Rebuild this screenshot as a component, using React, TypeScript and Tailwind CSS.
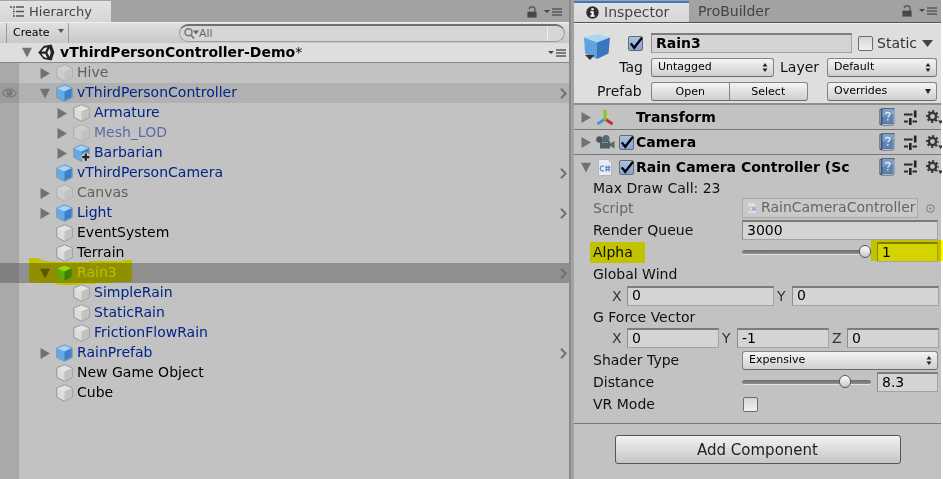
import { useState, type ReactNode } from 'react';

type CubeTone = 'blue' | 'white' | 'faded';

type Node = {
  name: string;
  depth: 1 | 2;
  cube: CubeTone;
  text: string;
  arrow?: 'right' | 'down';
  chevron?: boolean;
  added?: boolean;
  state?: 'hover' | 'selected';
};

const BLUE = 'text-[#002588]';
const NODES: Node[] = [
  { name: 'Hive', depth: 1, cube: 'faded', text: 'text-[#5f5f5f]', arrow: 'right' },
  { name: 'vThirdPersonController', depth: 1, cube: 'blue', text: BLUE, arrow: 'down', chevron: true, state: 'hover' },
  { name: 'Armature', depth: 2, cube: 'white', text: BLUE, arrow: 'right' },
  { name: 'Mesh_LOD', depth: 2, cube: 'faded', text: 'text-[#5a6ea6]', arrow: 'right' },
  { name: 'Barbarian', depth: 2, cube: 'blue', text: BLUE, arrow: 'right', added: true },
  { name: 'vThirdPersonCamera', depth: 1, cube: 'blue', text: BLUE, chevron: true },
  { name: 'Canvas', depth: 1, cube: 'faded', text: 'text-[#5f5f5f]', arrow: 'right' },
  { name: 'Light', depth: 1, cube: 'blue', text: BLUE, arrow: 'right', chevron: true },
  { name: 'EventSystem', depth: 1, cube: 'white', text: 'text-black' },
  { name: 'Terrain', depth: 1, cube: 'white', text: 'text-black' },
  { name: 'Rain3', depth: 1, cube: 'blue', text: 'text-[#b4c2dc]', arrow: 'down', chevron: true, state: 'selected' },
  { name: 'SimpleRain', depth: 2, cube: 'white', text: BLUE },
  { name: 'StaticRain', depth: 2, cube: 'white', text: BLUE },
  { name: 'FrictionFlowRain', depth: 2, cube: 'white', text: BLUE },
  { name: 'RainPrefab', depth: 1, cube: 'blue', text: BLUE, arrow: 'right', chevron: true },
  { name: 'New Game Object', depth: 1, cube: 'white', text: 'text-black' },
  { name: 'Cube', depth: 1, cube: 'white', text: 'text-black' },
];

const CUBES = {
  blue: { top: '#a4d4f7', left: '#65aae6', right: '#3f80c8', edge: '#7795b0' },
  white: { top: '#e4e4e4', left: '#dddddd', right: '#c2c2c2', edge: '#939393' },
  faded: { top: '#d0d0d0', left: '#cccccc', right: '#c2c2c2', edge: '#adadad' },
};

function CubeIcon({ tone, added }: { tone: CubeTone; added?: boolean }) {
  const c = CUBES[tone];
  return (
    <svg viewBox="0 0 17 18" className="h-[18px] w-[17px] shrink-0" aria-hidden="true">
      <path d="M8.5 .8 16.2 4v9.4L8.5 17.3.8 13.4V4z" fill={c.left} stroke={c.edge} strokeWidth="1" strokeLinejoin="round" />
      <path d="M8.5 1.4 15.6 4.3 8.5 7.6 1.4 4.3z" fill={c.top} />
      <path d="M8.5 7.6 15.6 4.3v8.8l-7.1 3.6z" fill={c.right} />
      {added && (
        <g>
          <circle cx="12.8" cy="13.2" r="4.6" fill="#c8c8c8" />
          <path d="M11.7 9.6h2.2v2.5h2.5v2.2h-2.5v2.5h-2.2v-2.5H9.2v-2.2h2.5z" fill="#222" />
        </g>
      )}
    </svg>
  );
}

function Triangle({ dir, className = 'fill-[#727272]' }: { dir: 'right' | 'down'; className?: string }) {
  return (
    <svg viewBox="0 0 10 11" className={`h-[11px] w-[10px] shrink-0 ${className}`} aria-hidden="true">
      <path d={dir === 'right' ? 'M.5 0 10 5.5.5 11z' : 'M0 .8h10L5 10.6z'} />
    </svg>
  );
}

function MenuIcon() {
  return (
    <svg viewBox="0 0 18 8" className="h-2 w-[18px]" aria-hidden="true">
      <path d="M0 2h6L3 5z" fill="#444" />
      <path d="M8 1h10M8 4h10M8 7h10" stroke="#5a5a5a" strokeWidth="1.3" />
    </svg>
  );
}

function LockIcon() {
  return (
    <svg viewBox="0 0 10 12" className="h-3 w-[10px]" aria-hidden="true">
      <path d="M2.2 3.2C2.4 0 8 0 8 3.2V6" fill="none" stroke="#5c5c5c" strokeWidth="1.4" />
      <path d="M.4 5.6h9.2v6H.4z" fill="#484848" />
    </svg>
  );
}

function UnityIcon() {
  return (
    <svg viewBox="0 0 17 17" className="h-[17px] w-[17px] shrink-0" aria-hidden="true">
      <path d="M.3 8.5 5.6 2l8-1.6 2.7 7.8-2.7 8.4-8-1.7z" fill="#222" />
      <path d="M3.3 7.5 6.3 4l3.1-.8-2.1 4.3zM3.3 9.7h4l2.1 4.2-3.2-.7zM9.3 8.5l2.3-4.3 1.1 4.3-1.1 4.5z" fill="#e8e8e8" />
    </svg>
  );
}

function EyeIcon() {
  return (
    <svg viewBox="0 0 15 10" className="h-[10px] w-[15px]" aria-hidden="true">
      <path d="M.6 5C3.8-.4 11.2-.4 14.4 5 11.2 10.4 3.8 10.4.6 5z" fill="none" stroke="#767676" strokeWidth="1.1" />
      <circle cx="7.5" cy="4.8" r="3" fill="#767676" />
      <path d="M6 4.6A1.6 1.6 0 0 1 7.5 3" stroke="#b0b0b0" fill="none" strokeWidth=".8" />
    </svg>
  );
}

function HierarchyRow({ node }: { node: Node }) {
  const bg = node.state === 'hover' ? 'bg-[#b1b1b1]' : node.state === 'selected' ? 'bg-[#8f8f8f]' : '';
  const gutter = node.state === 'hover' ? 'bg-[#9b9b9b]' : node.state === 'selected' ? 'bg-[#808080]' : '';
  return (
    <li className={`relative flex h-5 items-center ${bg}`}>
      <span className={`flex h-full w-[19px] shrink-0 items-center justify-center ${gutter}`}>
        {node.state === 'hover' && <EyeIcon />}
      </span>
      <div className={`flex items-center ${node.depth === 1 ? 'pl-[21px]' : 'pl-[38px]'}`}>
        <span className="flex w-4 pt-px">
          {node.arrow && <Triangle dir={node.arrow} className={node.state === 'selected' ? 'fill-[#585858]' : 'fill-[#727272]'} />}
        </span>
        <CubeIcon tone={node.cube} added={node.added} />
        <span className={`pb-0.5 pl-1 leading-[18px] ${node.text}`}>{node.name}</span>
      </div>
      {node.chevron && (
        <svg viewBox="0 0 7 11" className="mr-[2px] ml-auto h-[11px] w-[7px]" aria-hidden="true">
          <path d="M1 .8 5.6 5.5 1 10.2" fill="none" stroke="#707070" strokeWidth="2" />
        </svg>
      )}
      {node.state === 'selected' && (
        <svg viewBox="0 0 104 27" className="absolute -top-[5px] left-[29px] h-[27px] w-[104px] mix-blend-multiply" aria-hidden="true">
          <path d="M0 0h8l8 3 14 1h29l1-1h33l1-1h9v22H84v1H67v1H50v1H30l-5-2H8l-8-1z" fill="#ff0" />
        </svg>
      )}
    </li>
  );
}

function Hierarchy() {
  return (
    <section className="flex min-w-0 flex-col border-r-2 border-[#8a8a8a] bg-[#c2c2c2]">
      <header className="flex h-[22px] items-end justify-between bg-[#a2a2a2]">
        <h2 className="flex h-[21px] w-[111px] items-center gap-[5px] bg-linear-to-b from-[#e2e2e2] to-[#d6d6d6] pl-[10px] text-[13px] text-[#444]">
          <svg viewBox="0 0 14 11" className="h-[11px] w-[14px]" aria-hidden="true">
            <path d="M0 1h2M3 1h2M6 1h8M3 5.500h2M6 5.500h8M3 10h2M6 10h8" stroke="#555" strokeWidth="1.300" />
            <path d="M3.500 2.500v1.500M3.500 7v1.500" stroke="#777" />
          </svg>
          Hierarchy
        </h2>
        <div className="flex items-center gap-[7px] pr-[7px] pb-1">
          <button aria-label="Lock"><LockIcon /></button>
          <button aria-label="Hierarchy menu"><MenuIcon /></button>
        </div>
      </header>
      <div className="flex h-[21px] items-center border-t border-[#eee] bg-linear-to-b from-[#e0e0e0] to-[#c9c9c9] pr-1 pl-[6px]">
        <button className="flex h-full w-[63px] items-center justify-between border-x border-[#999] pr-1 pl-[6px] text-[11px] text-black">
          Create
          <svg viewBox="0 0 6 4" className="mb-1 h-1 w-[6px]" aria-hidden="true"><path d="M0 0h6L3 4z" fill="#555" /></svg>
        </button>
        <label className="ml-[110px] flex h-[18px] min-w-0 flex-1 items-center rounded-full border border-t-2 border-[#9a9a9a] border-t-[#707070] bg-[#d6d6d6] pl-1">
          <svg viewBox="0 0 15 11" className="h-[11px] w-[15px] shrink-0" aria-hidden="true">
            <circle cx="4.5" cy="4.3" r="3.5" fill="none" stroke="#777" strokeWidth="1.5" />
            <path d="m7 7 3 3.5" stroke="#777" strokeWidth="1.8" />
            <path d="M9 2.5h6l-3 4z" fill="#666" />
          </svg>
          <input aria-label="Search" defaultValue="All" className="min-w-0 flex-1 bg-transparent text-[11px] leading-[14px] text-[#666] outline-none" />
          <span className="mr-4 h-full w-px bg-[#efefef]" />
        </label>
      </div>
      <div className="flex h-5 items-center border-b border-[#888] bg-[#dedede] pr-[3px] pl-[22px]">
        <Triangle dir="down" />
        <span className="flex w-[28px] justify-center"><UnityIcon /></span>
        <h3 className="pb-0.5 font-bold text-black">vThirdPersonController-Demo<span className="font-normal">*</span></h3>
        <button aria-label="Scene menu" className="ml-auto"><MenuIcon /></button>
      </div>
      <ul className="flex-1 bg-linear-to-r from-[#a9a9a9] from-[19px] to-transparent to-[19px]">
        {NODES.map((n) => <HierarchyRow key={n.name} node={n} />)}
      </ul>
    </section>
  );
}

function Check({ label, checked = false, id }: { label: string; checked?: boolean; id?: string }) {
  const [on, setOn] = useState(checked);
  return (
    <span className="relative inline-flex h-[15px] w-[15px] shrink-0">
      <input
        id={id}
        type="checkbox"
        aria-label={label}
        checked={on}
        onChange={() => setOn(!on)}
        className="h-[15px] w-[15px] appearance-none rounded-[2px] border border-[#6b6b6b] bg-linear-to-b from-[#d5d5d5] to-[#f2f2f2] checked:from-[#a9c2e4] checked:to-[#86a5d2]"
      />
      {on && (
        <svg viewBox="0 0 15 15" className="pointer-events-none absolute inset-0 h-[15px] w-[15px]" aria-hidden="true">
          <path d="M2.8 7.4 6.2 11.8 14 1.8" fill="none" stroke="#000" strokeWidth="2.3" />
        </svg>
      )}
    </span>
  );
}

function Dropdown({ label, options, id, single, className = '' }: { label: string; options: string[]; id?: string; single?: boolean; className?: string }) {
  return (
    <span className={`relative flex ${className}`}>
      <select
        id={id}
        aria-label={label}
        className="h-[19px] w-full appearance-none rounded-[3px] border border-[#858585] border-b-[#6a6a6a] bg-linear-to-b from-[#f4f4f4] to-[#cfcfcf] pl-[6px] text-[11px] leading-4 text-black outline-none"
      >
        {options.map((o) => <option key={o}>{o}</option>)}
      </select>
      <svg viewBox="0 0 6 9" className="pointer-events-none absolute top-[5px] right-[6px] h-[9px] w-[6px]" aria-hidden="true">
        <path d={single ? 'M0 2h6L3 7z' : 'M3 0 5.5 3.5h-5zM3 9 .5 5.5h5z'} fill="#222" />
      </svg>
    </span>
  );
}

const FIELD = 'h-5 min-w-0 border border-[#a3a3a3] border-t-2 border-t-[#7c7c7c] border-l-[#8c8c8c] bg-[#d4d4d4] pb-0.5 pl-1 leading-4 text-black outline-none';

function ComponentTools() {
  return (
    <div className="ml-auto flex shrink-0 items-center gap-[9px]">
      <button aria-label="Help">
        <svg viewBox="0 0 16 18" className="h-[18px] w-4" aria-hidden="true">
          <path d="M.5 1.500 3 .3h12.500v15.500l-1.500 1.700H3L.5 16.500z" fill="#34496a" />
          <path d="M3.500 1h10.800v15L3.500 15.400z" fill="#5f84b4" />
          <path d="M3.500 1h10.800v5L3.500 9z" fill="#7f9fc8" />
          <path d="M1.700 1.800v14" stroke="#b8c8dc" strokeWidth=".7" />
          <path d="M14.900 1.600v14l-1.200 1.200L3 16.300" stroke="#e2e2e2" strokeWidth=".8" fill="none" />
          <path d="M6.600 6C6.700 3.800 11 3.900 10.900 6.200 10.800 7.800 8.900 8 8.800 9.700M8.800 11v1.600" stroke="#e8f0fa" strokeWidth="1.300" fill="none" />
        </svg>
      </button>
      <button aria-label="Presets">
        <svg viewBox="0 0 13 15" className="h-[15px] w-[13px]" aria-hidden="true">
          <path d="M0 4.5h8.5M0 11.500h4M8.500 11.500H13" stroke="#2c2c2c" strokeWidth="1.8" />
          <path d="M11.200 .5v7M6.300 8v7" stroke="#222" strokeWidth="2.6" />
        </svg>
      </button>
      <button aria-label="Component menu" className="-mr-px">
        <svg viewBox="0 0 16 15" className="h-[15px] w-4" aria-hidden="true">
          <circle cx="6.5" cy="6.5" r="3.6" fill="none" stroke="#333" strokeWidth="2.3" />
          <circle cx="6.5" cy="6.5" r="5.4" fill="none" stroke="#333" strokeWidth="2" strokeDasharray="2.1 2.14" strokeDashoffset="1" />
          <path d="M12 10.5h5l-2.500 3.500z" fill="#333" />
        </svg>
      </button>
    </div>
  );
}

function ScriptIcon({ className }: { className: string }) {
  return (
    <svg viewBox="0 0 14 17" className={className} aria-hidden="true">
      <path d="M.5.5h9.3L13.5 4v12.500H.5z" fill="#e9ecf1" stroke="#b3b7bd" />
      <path d="M6 7.400C3.800 6.400 2.300 7.600 2.300 9.500s1.500 3.100 3.700 2.100M8.500 6.500v6M10.900 6.500v6M7.200 8.400h5.200M7.200 10.600h5.200" fill="none" stroke="#5a86d2" strokeWidth="1.200" />
    </svg>
  );
}

function ComponentHeader({ title, open, icon, checkable }: { title: string; open?: boolean; icon: ReactNode; checkable?: boolean }) {
  return (
    <header className="flex h-[24px] items-center pl-[7px]">
      <Triangle dir={open ? 'down' : 'right'} />
      <span className="flex w-[28px] items-center justify-center">{icon}</span>
      <span className="flex w-[17px] shrink-0">{checkable && <Check label={`Enable ${title}`} checked />}</span>
      <h3 className="font-bold whitespace-nowrap text-black">{title}</h3>
      <ComponentTools />
    </header>
  );
}

const ROW_HEIGHT = { normal: 'h-[22px]', short: 'h-[21px]', tight: 'h-[18px]' };

function Row({ label, id, children, tone = 'text-[#111]', mark, size = 'normal' }: { label: string; id?: string; children?: ReactNode; tone?: string; mark?: boolean; size?: keyof typeof ROW_HEIGHT }) {
  return (
    <div className={`flex items-center pr-[3px] pl-[19px] ${ROW_HEIGHT[size]}`}>
      <span className={`relative w-[149px] shrink-0 whitespace-nowrap ${tone}`}>
        {id ? <label htmlFor={id}>{label}</label> : label}
        {mark && <span className="absolute -top-px -left-[3px] h-[21px] w-[55px] bg-[#ff0] mix-blend-multiply" />}
      </span>
      {children}
    </div>
  );
}

function SliderField({ id, label, value, max, step, mark }: { id: string; label: string; value: number; max: number; step: number; mark?: boolean }) {
  const [v, setV] = useState(value);
  return (
    <>
      <input
        id={id}
        type="range"
        min={0}
        max={max}
        step={step}
        value={v}
        onChange={(e) => setV(Number(e.target.value))}
        className="h-[5px] min-w-0 flex-1 appearance-none rounded-full border-b border-[#e2e2e2] bg-linear-to-b from-[#6c6c6c] to-[#8e8e8e] [&::-webkit-slider-thumb]:h-[13px] [&::-webkit-slider-thumb]:w-3 [&::-webkit-slider-thumb]:appearance-none [&::-webkit-slider-thumb]:rounded-full [&::-webkit-slider-thumb]:border [&::-webkit-slider-thumb]:border-[#555] [&::-webkit-slider-thumb]:bg-linear-to-b [&::-webkit-slider-thumb]:from-white [&::-webkit-slider-thumb]:to-[#c8c8c8]"
      />
      <span className="relative ml-[6px] flex w-[61px]">
        <input aria-label={`${label} value`} value={v} onChange={(e) => setV(Number(e.target.value) || 0)} className={`${FIELD} w-full`} />
        {mark && <span className="pointer-events-none absolute -top-[2px] -left-[6px] h-[21px] w-[72px] bg-[#ff0] mix-blend-multiply" />}
      </span>
    </>
  );
}

function VectorFields({ name, values, size = 'short' }: { name: string; values: [string, string][]; size?: keyof typeof ROW_HEIGHT }) {
  return (
    <div className={`flex items-center gap-[3px] pr-[2px] pl-[38px] ${ROW_HEIGHT[size]}`}>
      {values.map(([axis, value]) => (
        <label key={axis} className="flex min-w-0 flex-1 items-center text-[#333]">
          <span className="w-[15px] shrink-0">{axis}</span>
          <input aria-label={`${name} ${axis}`} defaultValue={value} className={`${FIELD} w-full flex-1`} />
        </label>
      ))}
    </div>
  );
}

function ObjectHeader() {
  return (
    <div className="flex h-[81px] border-b-2 border-[#8e8e8e] bg-[#dedede] pt-[9px] pr-1">
      <svg viewBox="0 0 28 28" className="ml-[9px] h-7 w-7 shrink-0" aria-hidden="true">
        <path d="M1 4.500 14.500 1 27 4.500 14 9.500z" fill="#a9d6f7" />
        <path d="M1 4.500 14 9.500v16.500L2 20.500z" fill="#5fa3de" />
        <path d="M27 4.500 14 9.500v16.500l11.500-5.500z" fill="#3976bf" />
        <path d="M2 22h9.500L7 27z" fill="#333" />
      </svg>
      <div className="flex min-w-0 flex-1 flex-col gap-1">
        <div className="flex h-5 items-center">
          <span className="ml-[17px] flex"><Check label="Active" checked /></span>
          <input aria-label="Object name" defaultValue="Rain3" className={`${FIELD} ml-2 flex-1 font-bold`} />
          <span className="ml-[6px] flex"><Check id="static" label="Static" /></span>
          <label htmlFor="static" className="ml-1 w-[45px] text-[#333]">Static</label>
          <button aria-label="Static options" className="mr-1">
            <svg viewBox="0 0 11 7" className="h-[7px] w-[11px]" aria-hidden="true"><path d="M0 0h11L5.500 7z" fill="#444" /></svg>
          </button>
        </div>
        <div className="flex h-5 items-center">
          <label htmlFor="tag" className="w-[32px] shrink-0 text-right text-[#111]">Tag</label>
          <Dropdown id="tag" label="Tag" options={['Untagged', 'Player', 'MainCamera']} className="ml-2 w-[123px] shrink-0" />
          <label htmlFor="layer" className="ml-[6px] w-[47px] shrink-0 text-[#111]">Layer</label>
          <Dropdown id="layer" label="Layer" options={['Default', 'Water', 'UI']} className="min-w-0 flex-1" />
        </div>
        <div className="-ml-[14px] flex h-5 items-center">
          <span className="w-[54px] shrink-0 text-[#111]">Prefab</span>
          <div className="flex h-[19px] w-[157px] shrink-0 overflow-hidden rounded-[3px] border border-[#858585] border-b-[#6a6a6a] bg-linear-to-b from-[#f4f4f4] to-[#cfcfcf] text-[11px] text-black">
            <button className="w-1/2 border-r border-[#858585]">Open</button>
            <button className="w-1/2">Select</button>
          </div>
          <Dropdown label="Overrides" options={['Overrides']} single className="ml-[19px] min-w-0 flex-1" />
        </div>
      </div>
    </div>
  );
}

function Inspector() {
  return (
    <section className="ml-[3px] flex min-w-0 flex-col bg-[#c2c2c2]">
      <header className="flex h-[23px] items-stretch border-b border-[#555] bg-[#a2a2a2]">
        <h2 className="mt-px flex w-[115px] items-center gap-[5px] border-t-2 border-[#3d78c4] bg-linear-to-b from-[#e2e2e2] to-[#d6d6d6] pb-px pl-3 text-[#444]">
          <svg viewBox="0 0 13 13" className="h-[13px] w-[13px]" aria-hidden="true">
            <circle cx="6.500" cy="6.500" r="6.200" fill="#2e2e2e" />
            <path d="M5.300 2.200h2.400v2H5.300zM4.300 5.300h3.400v4h1.100v1.500H4.300V9.300h1.200V6.800H4.300z" fill="#fff" />
          </svg>
          Inspector
        </h2>
        <button className="pl-[9px] text-[#444]">ProBuilder</button>
        <div className="ml-auto flex items-center gap-[7px] pr-[4px]">
          <button aria-label="Lock inspector"><LockIcon /></button>
          <button aria-label="Inspector menu"><MenuIcon /></button>
        </div>
      </header>
      <div className="border-t border-[#eee]">
        <ObjectHeader />
        <article className="border-b border-[#777]">
          <ComponentHeader
            title="Transform"
            icon={
              <svg viewBox="0 0 18 17" className="h-[17px] w-[18px]" aria-hidden="true">
                <path d="m9 10-7.500 5" stroke="#3c9bc9" strokeWidth="3" />
                <path d="m9 10 7.500 5" stroke="#cf2929" strokeWidth="3" />
                <path d="M9 11.500V1" stroke="#8ec31f" strokeWidth="3" />
              </svg>
            }
          />
        </article>
        <article className="border-b border-[#777]">
          <ComponentHeader
            title="Camera"
            checkable
            icon={
              <svg viewBox="0 0 19 14" className="h-[14px] w-[19px]" aria-hidden="true">
                <circle cx="3.500" cy="4.500" r="3.300" fill="#4a565d" />
                <circle cx="10" cy="3.500" r="3.500" fill="#5b6a72" />
                <path d="M4 6h10v7.500H4z" fill="#4f5e66" />
                <path d="m14 8.500 4.500-2.500v7.500L14 11z" fill="#59676e" />
                <path d="M6 7.500h6" stroke="#8a99a0" />
              </svg>
            }
          />
        </article>
        <article className="border-b border-[#777] pb-[8px]">
          <ComponentHeader title="Rain Camera Controller (Sc" open checkable icon={<ScriptIcon className="h-[17px] w-[14px]" />} />
          <Row label="Max Draw Call: 23" size="tight" />
          <Row label="Script" tone="text-[#666]">
            <span className="flex h-5 min-w-0 flex-1 items-center border border-[#aaa] bg-[#c9c9c9] pl-1 text-[#666]">
              <ScriptIcon className="mr-1 h-3 w-[10px] shrink-0 opacity-60" />
              <span className="pb-0.5 whitespace-nowrap">RainCameraController</span>
            </span>
            <button aria-label="Pick script" className="flex w-5 shrink-0 justify-end pr-[3px]">
              <svg viewBox="0 0 9 9" className="h-[9px] w-[9px]" aria-hidden="true">
                <circle cx="4.500" cy="4.500" r="3.800" fill="none" stroke="#777" />
                <circle cx="4.500" cy="4.500" r="1" fill="#777" />
              </svg>
            </button>
          </Row>
          <Row label="Render Queue" id="queue">
            <input id="queue" defaultValue="3000" className={`${FIELD} flex-1`} />
          </Row>
          <Row label="Alpha" id="alpha" mark>
            <SliderField id="alpha" label="Alpha" value={1} max={1} step={0.01} mark />
          </Row>
          <Row label="Global Wind" />
          <VectorFields name="Global Wind" values={[['X', '0'], ['Y', '0']]} />
          <Row label="G Force Vector" size="short" />
          <VectorFields name="G Force Vector" values={[['X', '0'], ['Y', '-1'], ['Z', '0']]} size="normal" />
          <Row label="Shader Type" id="shader">
            <Dropdown id="shader" label="Shader Type" options={['Expensive', 'Cheap']} className="min-w-0 flex-1" />
          </Row>
          <Row label="Distance" id="distance">
            <SliderField id="distance" label="Distance" value={8.3} max={10} step={0.1} />
          </Row>
          <Row label="VR Mode" id="vr">
            <span className="ml-px flex"><Check id="vr" label="VR Mode" /></span>
          </Row>
        </article>
        <div className="flex justify-center pt-[11px]">
          <button className="h-[29px] w-[286px] rounded-[3px] border border-[#555] bg-linear-to-b from-[#f2f2f2] to-[#c6c6c6] text-[15px] text-[#222]">
            Add Component
          </button>
        </div>
      </div>
    </section>
  );
}

export default function App() {
  return (
    <main className="min-h-screen overflow-hidden bg-white pr-0.5 font-['DejaVu_Sans',sans-serif] text-[14px] leading-[18px]">
      <div className="grid min-h-screen grid-cols-[minmax(0,571fr)_minmax(0,370fr)] bg-[#a2a2a2]">
        <Hierarchy />
        <Inspector />
      </div>
    </main>
  );
}
